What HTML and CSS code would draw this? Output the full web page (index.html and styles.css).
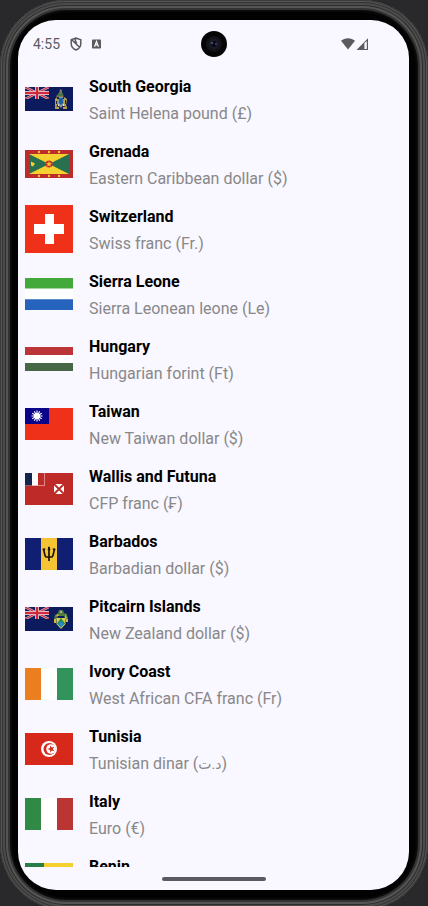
FILE: index.html
```html
<!DOCTYPE html>
<html lang="en">
<head>
<meta charset="utf-8">
<meta name="viewport" content="width=device-width, initial-scale=1">
<title>Countries</title>
<link rel="stylesheet" href="styles.css">
</head>
<body>
<svg class="defs" aria-hidden="true">
  <symbol id="union-jack" viewBox="0 0 24 12">
    <path fill="#15205f" d="M0 0h24v12H0z"/>
    <path stroke="#e4dfec" stroke-width="2.400" d="M0 0l24 12M24 0L0 12"/>
    <path stroke="#cf3040" stroke-width="1.300" d="M0 0l24 12M24 0L0 12"/>
    <path stroke="#f0e6ee" stroke-width="3.800" d="M12 0v12M0 6h24"/>
    <path stroke="#cf2b3c" stroke-width="2.400" d="M12 0v12M0 6h24"/>
  </symbol>
</svg>
<div class="phone">
  <div class="screen">
    <header class="status">
      <div class="status-left">
        <span class="clock">4:55</span>
        <svg class="shield" viewBox="0 0 12 14" aria-hidden="true"><path fill="none" stroke="#5b5b5f" stroke-width="1.500" d="M6 1L1.200 2.800v3.800C1.200 9.600 3.300 12 6 13c2.700-1 4.800-3.400 4.800-6.400V2.800zM2 3l7.800 7.500M6 1.200c-1.200 2-.8 3.800 1 4.800"/></svg>
        <svg class="badge" viewBox="0 0 10 10" aria-hidden="true"><path fill="#5b5b5f" d="M1 0h8a1 1 0 0 1 1 1v8a1 1 0 0 1-1 1H1a1 1 0 0 1-1-1V1a1 1 0 0 1 1-1z"/><path fill="none" stroke="#fff" stroke-width="1.300" d="M2.800 8L5 2.200 7.200 8M3.800 6h2.400"/></svg>
      </div>
      <svg class="camera" viewBox="0 0 26 26" aria-hidden="true"><circle cx="13" cy="13" r="13" fill="#050506"/><circle cx="13" cy="13" r="8" fill="#121317"/><circle cx="13" cy="13" r="5" fill="#1b1d2b"/><circle cx="13" cy="13" r="3" fill="#08080f"/><circle cx="11" cy="12" r="1.300" fill="#35506f"/><circle cx="15" cy="13" r="1" fill="#5a3a80"/></svg>
      <svg class="signal" viewBox="0 0 28 12" aria-hidden="true"><path fill="#5b5b5f" d="M0 2.800C4-.7 10-.7 14 2.800L7 11.500z"/><path fill="#5b5b5f" d="M15.500 12L27 .2V12zM23.400 5v6h2.400V3z" fill-rule="evenodd"/></svg>
    </header>
    <main class="viewport">
      <ul class="list">
        <li class="row">
          <span class="flag"><svg viewBox="0 0 48 24"><path fill="#0c1b5e" d="M0 0h48v24H0z"/><use href="#union-jack" width="24" height="12"/><path fill="#7d7960" d="M35 2l2 1v4l2 2-2 2h-4l-2-2 3-2z"/><path fill="#4d7548" d="M33 6h5v3h-5z"/><path fill="#8d989c" d="M32 10h7v7l-3 4-4-4z"/><path fill="#1d5fa5" d="M34 11h4v5l-2 2-2-2z"/><path fill="#b8a048" d="M30 12l2-2v9h-2zM39 10l3 2-1 7h-2zM30 19l4 1v2h-4zM38 20l4-1v3h-4z"/><path fill="#202a35" d="M31 14h1v3h-1zM40 13h1v4h-1zM32 10h2v2h-2zM38 10h1v2h-1z"/><path fill="#ddd" d="M33 17h1v2h-1zM38 17h1v2h-1z"/></svg></span>
          <span class="text"><b class="name">South Georgia</b><span class="money">Saint Helena pound (£)</span></span>
        </li>
        <li class="row">
          <span class="flag"><svg viewBox="0 0 48 28"><path fill="#bd2b2c" d="M0 0h48v28H0z"/><path fill="#f6d130" d="M4 4h40v20H4z"/><path fill="#28704f" d="M4 4l20 10L4 24zM44 4L24 14l20 10z"/><circle cx="24" cy="14" r="3.600" fill="#c82d2c"/><path fill="#f6d130" d="M24 11l.8 2.200h2.200l-1.800 1.300.7 2.200-1.900-1.400-1.900 1.400.7-2.200-1.800-1.300h2.200zM6 11.500l4 2-2 3-2-1z"/><g fill="#f6d130"><circle cx="14" cy="2" r="1.200"/><circle cx="24" cy="2" r="1.200"/><circle cx="34" cy="2" r="1.200"/><circle cx="14" cy="26" r="1.200"/><circle cx="24" cy="26" r="1.200"/><circle cx="34" cy="26" r="1.200"/></g></svg></span>
          <span class="text"><b class="name">Grenada</b><span class="money">Eastern Caribbean dollar ($)</span></span>
        </li>
        <li class="row">
          <span class="flag"><svg viewBox="0 0 48 48"><path fill="#ee3118" d="M0 0h48v48H0z"/><path fill="#fff" d="M20 9h9v10h10v10H29v10h-9V29H9V19h11z"/></svg></span>
          <span class="text"><b class="name">Switzerland</b><span class="money">Swiss franc (Fr.)</span></span>
        </li>
        <li class="row">
          <span class="flag"><svg viewBox="0 0 48 32"><path fill="#fff" d="M0 0h48v32H0z"/><path fill="#43a93a" d="M0 0h48v10.600H0z"/><path fill="#2563bd" d="M0 21.300h48V32H0z"/></svg></span>
          <span class="text"><b class="name">Sierra Leone</b><span class="money">Sierra Leonean leone (Le)</span></span>
        </li>
        <li class="row">
          <span class="flag"><svg viewBox="0 0 48 24"><path fill="#fff" d="M0 0h48v24H0z"/><path fill="#bb3538" d="M0 0h48v8H0z"/><path fill="#466847" d="M0 16h48v8H0z"/></svg></span>
          <span class="text"><b class="name">Hungary</b><span class="money">Hungarian forint (Ft)</span></span>
        </li>
        <li class="row">
          <span class="flag"><svg viewBox="0 0 48 32"><path fill="#ee3118" d="M0 0h48v32H0z"/><path fill="#0a048b" d="M0 0h24v16H0z"/><path stroke="#fff" stroke-width="1.100" d="M12 2.500v11M6.500 8h11M9.250 3.240l5.500 9.520M14.750 3.240l-5.500 9.520M7.240 5.250l9.520 5.500M16.760 5.250l-9.520 5.500"/><circle cx="12" cy="8" r="3.100" fill="#fff"/></svg></span>
          <span class="text"><b class="name">Taiwan</b><span class="money">New Taiwan dollar ($)</span></span>
        </li>
        <li class="row">
          <span class="flag"><svg viewBox="0 0 48 32"><path fill="#bd2a27" d="M0 0h48v32H0z"/><path fill="#e08785" d="M0 0h20v13H0z"/><path fill="#bd2a27" d="M13 0h6v12h-6z"/><path fill="#fff" d="M7 0h6v12.400H7z"/><path fill="#14244e" d="M0 0h7v12.400H0z"/><path fill="#fff" d="M29 11h10v10H29z"/><path stroke="#bd2a27" stroke-width="1.800" d="M28.500 10.500l11 11M39.500 10.500l-11 11"/></svg></span>
          <span class="text"><b class="name">Wallis and Futuna</b><span class="money">CFP franc (₣)</span></span>
        </li>
        <li class="row">
          <span class="flag"><svg viewBox="0 0 48 32"><path fill="#101f72" d="M0 0h48v32H0z"/><path fill="#f6c334" d="M16 0h16v32H16z"/><path fill="none" stroke="#17130a" stroke-width="1.700" d="M24 9v14M18 11c2 2 1 7 3 8h6c2-1 1-6 3-8"/><path fill="#17130a" d="M24 8l1.500 4h-3zM17.500 10.500l3 0-1 2.500zM30.500 10.500h-3l1 2.500z"/></svg></span>
          <span class="text"><b class="name">Barbados</b><span class="money">Barbadian dollar ($)</span></span>
        </li>
        <li class="row">
          <span class="flag"><svg viewBox="0 0 48 24"><path fill="#0c1b5e" d="M0 0h48v24H0z"/><use href="#union-jack" width="24" height="12"/><path fill="#527b40" d="M34 3h4l1 3 3 1 1 5-2 2-2-5h-6l-2 5-2-2 1-4 3-2z"/><path fill="#d0ba45" d="M31 9l2-2 1 2zM40 7l2 4-2 1zM29 12h2v4h-2zM41 12h2v3h-2z"/><path fill="#d8cf55" d="M31.500 11h9v6L36 22l-4.500-5z"/><path fill="#24854d" d="M36 11l4 5.500L36 20l-4-3.500z"/><path fill="#258bc6" d="M36 14l3 3-3 4-3-4z"/><path fill="#a9aaa1" d="M35 4h2v2h-2z"/></svg></span>
          <span class="text"><b class="name">Pitcairn Islands</b><span class="money">New Zealand dollar ($)</span></span>
        </li>
        <li class="row">
          <span class="flag"><svg viewBox="0 0 48 32"><path fill="#fff" d="M0 0h48v32H0z"/><path fill="#eb7f1f" d="M0 0h16v32H0z"/><path fill="#32945b" d="M32 0h16v32H32z"/></svg></span>
          <span class="text"><b class="name">Ivory Coast</b><span class="money">West African CFA franc (Fr)</span></span>
        </li>
        <li class="row">
          <span class="flag"><svg viewBox="0 0 48 32"><path fill="#d6291c" d="M0 0h48v32H0z"/><circle cx="24" cy="16" r="8" fill="#fff"/><circle cx="24.500" cy="16" r="6" fill="#d6291c"/><circle cx="26" cy="16" r="4.800" fill="#fff"/><path fill="#d6291c" d="M22.500 16l2.600-.9v-2.700l1.700 2.200 2.600-.9-1.600 2.300 1.600 2.300-2.600-.9-1.700 2.200v-2.700z"/></svg></span>
          <span class="text"><b class="name">Tunisia</b><span class="money">Tunisian dinar (<bdi class="arabic" lang="ar">د.ت</bdi>)</span></span>
        </li>
        <li class="row">
          <span class="flag"><svg viewBox="0 0 48 32"><path fill="#fff" d="M0 0h48v32H0z"/><path fill="#308a45" d="M0 0h16v32H0z"/><path fill="#bb3535" d="M32 0h16v32H32z"/></svg></span>
          <span class="text"><b class="name">Italy</b><span class="money">Euro (€)</span></span>
        </li>
        <li class="row">
          <span class="flag"><svg viewBox="0 0 48 32"><path fill="#f5d02e" d="M0 0h48v16H0z"/><path fill="#d6291c" d="M0 16h48v16H0z"/><path fill="#267d49" d="M0 0h19v32H0z"/></svg></span>
          <span class="text"><b class="name">Benin</b></span>
        </li>
      </ul>
    </main>
    <footer class="nav"><span class="handle"></span></footer>
  </div>
</div>
</body>
</html>
```
FILE: styles.css
```css
* {
  box-sizing: border-box;
}

html,
body {
  height: 100%;
}

body {
  margin: 0;
  overflow: hidden;
  background: #29292c;
  font-family: Roboto, "Noto Sans", "DejaVu Sans", sans-serif;
}

.defs {
  display: none;
}

/* Device frame: metal rings around a black bezel */
.phone {
  height: calc(100% + 4px);
  padding: 20px 19px 20px 18px;
  border-radius: 66px;
  background: #020202;
  box-shadow:
    inset 0 0 0 1px #3a3a3a,
    inset 0 0 0 2px #555,
    inset 0 0 0 3px #333,
    inset 0 0 0 5px #4b4b4a,
    inset 0 0 0 6px #2c2c2c,
    inset 0 0 0 8px #555,
    inset 0 0 0 10px #333,
    inset 0 0 3px 11px #151515;
}

.screen {
  display: flex;
  flex-direction: column;
  height: 100%;
  overflow: hidden;
  border-radius: 38px;
  background: #f9f7ff;
}

.status {
  display: grid;
  grid-template-columns: 1fr 26px 1fr;
  align-items: center;
  flex: none;
  height: 48px;
  padding: 0 15px;
}

.status-left {
  display: flex;
  align-items: center;
  gap: 10px;
}

.clock {
  color: #5b5b5f;
  font-size: 14px;
  line-height: 16px;
}

.shield {
  width: 12px;
  height: 14px;
}

.badge {
  width: 9px;
  height: 10px;
}

.camera {
  width: 26px;
  height: 26px;
}

.signal {
  justify-self: end;
  width: 28px;
  height: 12px;
  margin-right: 25px;
}

.viewport {
  flex: 1;
  min-height: 0;
  overflow: hidden;
}

.list {
  margin: 0;
  padding: 0;
  list-style: none;
}

.row {
  display: flex;
  align-items: flex-start;
  gap: 16px;
  height: 65px;
  padding: 7px 7px 0;
}

.flag {
  display: flex;
  align-items: center;
  flex: none;
  width: 48px;
  height: 48px;
}

.flag svg {
  display: block;
  width: 100%;
}

.text {
  display: flex;
  flex-direction: column;
  gap: 3px;
  font-size: 16px;
  line-height: 24px;
}

.name {
  color: #000;
  font-weight: 700;
}

.money {
  color: #888;
}

.arabic {
  font-size: 14px;
}

.nav {
  display: flex;
  align-items: center;
  justify-content: center;
  flex: none;
  height: 23px;
}

.handle {
  width: 104px;
  height: 4px;
  border-radius: 2px;
  background: #5b5a60;
}
```
